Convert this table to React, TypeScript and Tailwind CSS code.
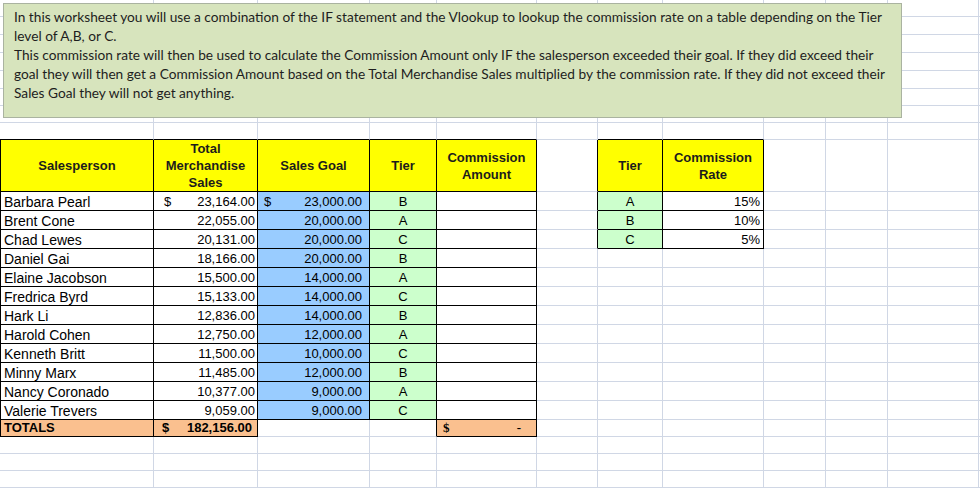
import type { ReactNode } from "react";

type Edge = "gg" | "gb" | "bg" | "bb";

const EDGES: Record<Edge, string> = {
  gg: "border-r-[#d0d7e5] border-b-[#d0d7e5]",
  gb: "border-r-[#d0d7e5] border-b-black",
  bg: "border-r-black border-b-[#d0d7e5]",
  bb: "border-r-black border-b-black",
};

function Cell({
  e = "gg",
  className = "",
  children,
}: {
  e?: Edge;
  className?: string;
  children?: ReactNode;
}) {
  return (
    <div className={`flex min-w-0 items-center overflow-hidden border-r border-b ${EDGES[e]} ${className}`}>
      {children}
    </div>
  );
}

// fills the rest of a row with plain grid cells
function Blank({ n, e = "gg" }: { n: number; e?: Edge }) {
  return (
    <>
      {Array.from({ length: n }).map((_, i) => (
        <Cell key={i} e={e} />
      ))}
    </>
  );
}

const people = [
  { name: "Barbara Pearl", sales: "23,164.00", goal: "23,000.00", tier: "B" },
  { name: "Brent Cone", sales: "22,055.00", goal: "20,000.00", tier: "A" },
  { name: "Chad Lewes", sales: "20,131.00", goal: "20,000.00", tier: "C" },
  { name: "Daniel Gai", sales: "18,166.00", goal: "20,000.00", tier: "B" },
  { name: "Elaine Jacobson", sales: "15,500.00", goal: "14,000.00", tier: "A" },
  { name: "Fredrica Byrd", sales: "15,133.00", goal: "14,000.00", tier: "C" },
  { name: "Hark Li", sales: "12,836.00", goal: "14,000.00", tier: "B" },
  { name: "Harold Cohen", sales: "12,750.00", goal: "12,000.00", tier: "A" },
  { name: "Kenneth Britt", sales: "11,500.00", goal: "10,000.00", tier: "C" },
  { name: "Minny Marx", sales: "11,485.00", goal: "12,000.00", tier: "B" },
  { name: "Nancy Coronado", sales: "10,377.00", goal: "9,000.00", tier: "A" },
  { name: "Valerie Trevers", sales: "9,059.00", goal: "9,000.00", tier: "C" },
];

const rates = [
  { tier: "A", rate: "15%" },
  { tier: "B", rate: "10%" },
  { tier: "C", rate: "5%" },
];

const head = "justify-center bg-[#ffff00] text-center text-[13px] font-bold leading-[17px] text-[#1c1c1c]";

export default function App() {
  return (
    <div className="relative h-[488px] w-[980px] overflow-hidden bg-white font-['Liberation_Sans',Arial,sans-serif] text-black">
      <div className="grid grid-cols-[154px_104px_112px_67px_100px_61px_65px_101px_62px_62px_91px_40px] grid-rows-[17px_18px_18px_18px_18px_17px_17px_17px_52px_repeat(12,19px)_17px_17px_17px_17px_17px]">
        {/* rows above the table */}
        <Blank n={84} />
        <Blank n={5} e="gb" />
        <Cell />
        <Blank n={2} e="gb" />
        <Blank n={4} />

        {/* header */}
        <Cell e="bb" className={`border-l border-l-black ${head}`}>Salesperson</Cell>
        <Cell e="bb" className={head}>
          Total
          <br />
          Merchandise
          <br />
          Sales
        </Cell>
        <Cell e="bb" className={head}>Sales Goal</Cell>
        <Cell e="bb" className={head}>Tier</Cell>
        <Cell e="bb" className={head}>
          Commission
          <br />
          Amount
        </Cell>
        <Cell e="bg" />
        <Cell e="bb" className={head}>Tier</Cell>
        <Cell e="bb" className={head}>
          Commission
          <br />
          Rate
        </Cell>
        <Blank n={4} />

        {/* data */}
        {people.map((p, i) => {
          const rate = rates[i];
          return (
            <div key={p.name} className="contents">
              <Cell e="bb" className="border-l border-l-black pt-[2px] pl-[3px] text-[14px]">
                {p.name}
              </Cell>
              <Cell e="bb" className="justify-between pt-[1px] pr-[2px] pl-[10px] text-[13px]">
                <span>{i === 0 ? "$" : ""}</span>
                <span>{p.sales}</span>
              </Cell>
              <Cell e="bb" className="justify-between bg-[#99ccff] pt-[1px] pr-[7px] pl-[6px] text-[13px]">
                <span>{i === 0 ? "$" : ""}</span>
                <span>{p.goal}</span>
              </Cell>
              <Cell e="bb" className="justify-center bg-[#ccffcc] pt-[1px] text-[13px]">
                {p.tier}
              </Cell>
              <Cell e="bb" />
              <Cell e={rate ? "bg" : "gg"} />
              {rate ? (
                <>
                  <Cell e="bb" className="justify-center bg-[#ccffcc] pt-[1px] text-[13px]">
                    {rate.tier}
                  </Cell>
                  <Cell e="bb" className="justify-end pt-[1px] pr-[3px] text-[13px]">
                    {rate.rate}
                  </Cell>
                </>
              ) : (
                <Blank n={2} />
              )}
              <Blank n={4} />
            </div>
          );
        })}

        {/* totals */}
        <Cell e="bb" className="border-l border-l-black bg-[#fac08f] pl-[3px] text-[13px] font-bold">
          TOTALS
        </Cell>
        <Cell e="bb" className="justify-between bg-[#fac08f] pr-[5px] pl-[8px] text-[13px] font-bold">
          <span>$</span>
          <span>182,156.00</span>
        </Cell>
        <Cell />
        <Cell e="bg" />
        <Cell e="bb" className="justify-between bg-[#fac08f] pr-[15px] pl-[6px] font-['Liberation_Serif',serif] text-[13px] font-bold">
          <span>$</span>
          <span>-</span>
        </Cell>
        <Blank n={7} />

        {/* empty rows */}
        <Blank n={48} />
      </div>

      {/* instruction text box floating over the sheet */}
      <div className="absolute top-[3px] left-[3px] h-[115px] w-[899px] border border-[#aab3a0] bg-[#d7e4bd] pt-[3px] pl-[10px] font-['Lato','Open_Sans',sans-serif] text-[13.7px] leading-[19px] whitespace-nowrap text-[#1e1e1e]">
        <div>
          In this worksheet you will use a combination of the IF statement and the Vlookup to lookup the commission rate on a
          table depending on the Tier
        </div>
        <div>level of A,B, or C.</div>
        <div>
          This commission rate will then be used to calculate the Commission Amount only IF the salesperson exceeded their goal.
          If they did exceed their
        </div>
        <div>
          goal they will then get a Commission Amount based on the Total Merchandise Sales multiplied by the commission rate. If
          they did not exceed their
        </div>
        <div>Sales Goal they will not get anything.</div>
      </div>
    </div>
  );
}
